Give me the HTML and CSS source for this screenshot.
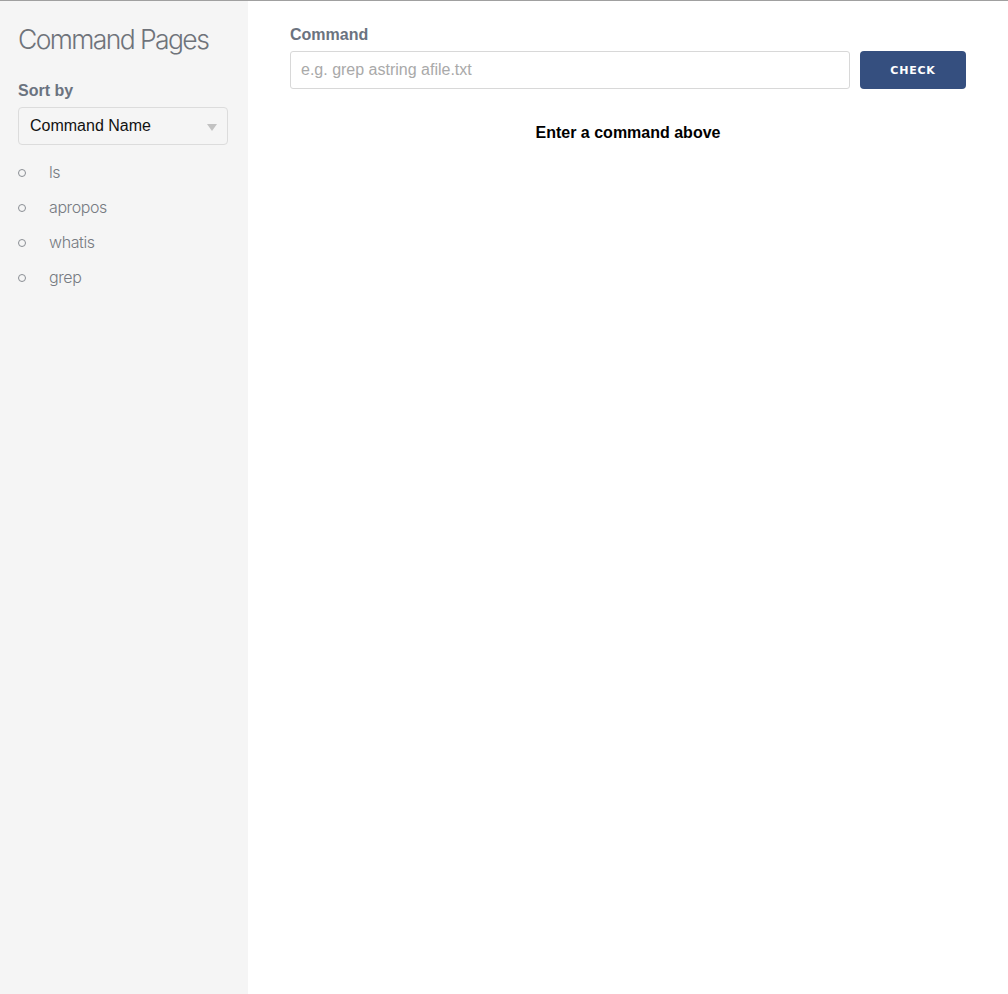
FILE: index.html
```html
<!DOCTYPE html>
<html>
<head>
<meta charset="utf-8">
<link rel="stylesheet" href="styles.css">
</head>
<body>
<div class="app">
  <aside class="sidebar">
    <h1 class="title">Command Pages</h1>
    <label class="label">Sort by</label>
    <div class="select">
      <span>Command Name</span>
      <span class="arrow"></span>
    </div>
    <ul class="list">
      <li>ls</li>
      <li>apropos</li>
      <li>whatis</li>
      <li>grep</li>
    </ul>
  </aside>
  <main class="main">
    <label class="label main-label">Command</label>
    <div class="row">
      <input class="input" type="text" placeholder="e.g. grep astring afile.txt">
      <button class="btn">CHECK</button>
    </div>
    <p class="hint">Enter a command above</p>
  </main>
</div>
</body>
</html>
```
FILE: styles.css
```css
* { box-sizing: border-box; }
html, body { margin: 0; padding: 0; height: 100%; }
body {
  font-family: "Liberation Sans", Arial, sans-serif;
  border-top: 1px solid #a0a0a0;
  background: #fff;
}
.app { display: flex; height: 993px; }
.sidebar {
  width: 248px;
  background: #f5f5f5;
  padding: 20px 20px 0 18px;
  flex-shrink: 0;
}
.title {
  margin: 0;
  font-family: Inter, "Liberation Sans", sans-serif;
  font-weight: 300;
  font-size: 26.5px;
  letter-spacing: -1.6px;
  color: #6f737a;
  line-height: 36px;
}
.label {
  display: block;
  font-weight: bold;
  font-size: 16px;
  color: #6b7380;
  line-height: 20px;
}
.sidebar .label { margin-top: 24px; }
.select {
  margin-top: 6px;
  height: 38px;
  border: 1px solid #dcdcdc;
  border-radius: 4px;
  background: #f5f5f5;
  display: flex;
  align-items: center;
  justify-content: space-between;
  padding: 0 10px 0 11px;
  font-size: 16px;
  color: #111;
}
.arrow {
  width: 0; height: 0;
  border-left: 5px solid transparent;
  border-right: 5px solid transparent;
  border-top: 7px solid #c2c2c2;
  margin-top: 2px;
}
.list {
  list-style: none;
  margin: 17px 0 0 0;
  padding: 0;
}
.list li {
  position: relative;
  padding-left: 31px;
  height: 35px;
  line-height: 20px;
  font-size: 16px;
  font-family: Inter, "Liberation Sans", sans-serif;
  font-weight: 300;
  letter-spacing: -0.4px;
  color: #777b82;
}
.list li::before {
  content: "";
  position: absolute;
  left: 0;
  top: 7px;
  width: 6px; height: 6px;
  border: 1px solid #8a8e94;
  border-radius: 50%;
}
.main {
  flex: 1;
  padding: 24px 42px 0 42px;
}
.row { display: flex; gap: 10px; margin-top: 6px; }
.input {
  flex: 1;
  height: 38px;
  border: 1px solid #d8d8d8;
  border-radius: 3px;
  padding: 0 10px;
  font-family: "Liberation Sans", Arial, sans-serif;
  font-size: 16px;
  outline: none;
}
.input::placeholder { color: #a9a9a9; }
.btn {
  width: 106px;
  height: 38px;
  background: #354f7f;
  color: #fff;
  border: none;
  border-radius: 4px;
  font-family: "DejaVu Sans", "Liberation Sans", sans-serif;
  font-weight: bold;
  font-size: 11px;
  letter-spacing: 0.8px;
  padding-top: 1px;
}
.hint {
  text-align: center;
  margin: 35px 0 0 0;
  font-weight: bold;
  font-size: 16px;
  color: #000;
}
```
